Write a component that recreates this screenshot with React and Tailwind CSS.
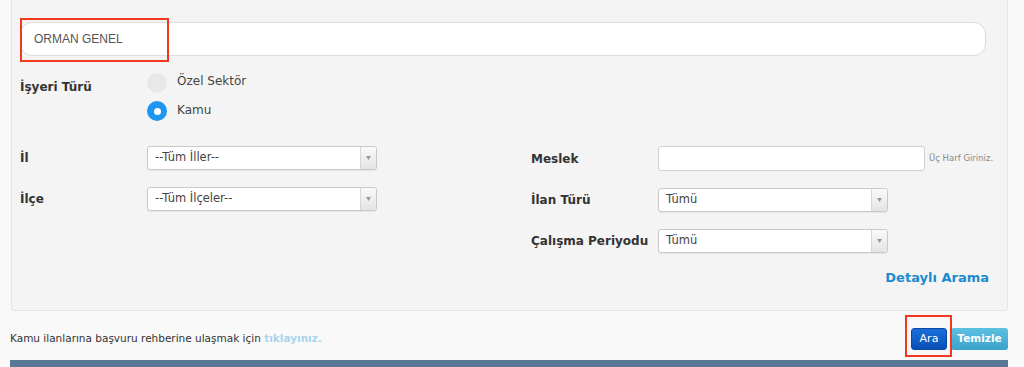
import React from 'react'

const FONT = { fontFamily: '"DejaVu Sans", Verdana, sans-serif' }

function Select({ value, w }) {
  return (
    <div className={`${w} h-[24px] flex items-stretch bg-white border border-[#c9c9c9] rounded-[3px] shadow-[0_1px_1px_rgba(0,0,0,0.06)]`}>
      <div className="flex-1 flex items-center pl-[7px] text-[11.5px] text-[#444]">{value}</div>
      <div className="w-[16px] border-l border-[#d6d6d6] bg-gradient-to-b from-[#fafafa] to-[#e4e4e4] rounded-r-[3px] flex items-center justify-center">
        <svg width="5" height="4" viewBox="0 0 5 4"><path d="M0 0h5L2.5 4z" fill="#999" /></svg>
      </div>
    </div>
  )
}

function Label({ children, w = 'w-[127px]' }) {
  return <div className={`${w} shrink-0 text-[12px] font-bold text-[#333]`}>{children}</div>
}

export default function App() {
  return (
    <div style={FONT} className="w-[1024px] h-[367px] overflow-hidden bg-[#f9f9f9] relative">
      {/* panel */}
      <div className="ml-[11px] w-[997px] h-[311px] bg-[#f4f4f4] border border-t-0 border-[#e4e4e4] rounded-b-[4px] pl-[8px] pr-[22px] pt-[22px]">
        {/* search */}
        <div className="relative">
          <div className="h-[34px] w-[966px] bg-white border border-[#dcdcdc] rounded-[12px] flex items-center pl-[13px] text-[12px] text-[#555]" style={{ fontFamily: '"Liberation Sans", Arial, sans-serif' }}>
            ORMAN GENEL
          </div>
          <div className="absolute left-0 top-[-4px] w-[149px] h-[44px] border-2 border-[#f0391f]" />
        </div>

        {/* isyeri turu */}
        <div className="flex mt-[17px]">
          <Label>
            <div className="pt-[5px]">İşyeri Türü</div>
          </Label>
          <div className="flex flex-col gap-[8px]">
            <div className="flex items-center gap-[10px]">
              <div className="w-[20px] h-[20px] rounded-full bg-[#e8e8e8]" />
              <span className="text-[12px] text-[#444] -mt-[4px]">Özel Sektör</span>
            </div>
            <div className="flex items-center gap-[10px]">
              <div className="w-[20px] h-[20px] rounded-full bg-[#1e96f0] flex items-center justify-center">
                <div className="w-[7px] h-[7px] rounded-full bg-white" />
              </div>
              <span className="text-[12px] text-[#444] -mt-[3px]">Kamu</span>
            </div>
          </div>
        </div>

        {/* fields */}
        <div className="flex mt-[25px]">
          <div className="w-[511px] shrink-0 flex flex-col gap-[17px]">
            <div className="flex items-center">
              <Label>İl</Label>
              <Select value="--Tüm İller--" w="w-[230px]" />
            </div>
            <div className="flex items-center">
              <Label>İlçe</Label>
              <Select value="--Tüm İlçeler--" w="w-[230px]" />
            </div>
          </div>
          <div className="flex flex-col gap-[17px]">
            <div className="flex items-center">
              <Label>Meslek</Label>
              <div className="w-[267px] shrink-0 h-[25px] bg-white border border-[#d0d0d0] rounded-[3px]" />
              <span className="ml-[4px] whitespace-nowrap text-[8.5px] text-[#888]">Üç Harf Giriniz.</span>
            </div>
            <div className="flex items-center">
              <Label>İlan Türü</Label>
              <Select value="Tümü" w="w-[230px]" />
            </div>
            <div className="flex items-center">
              <Label>Çalışma Periyodu</Label>
              <Select value="Tümü" w="w-[230px]" />
            </div>
          </div>
        </div>

        <div className="flex justify-end mt-[15px] -mr-[4px]">
          <span className="text-[13px] font-bold text-[#1a8bd0]">Detaylı Arama</span>
        </div>
      </div>

      {/* footer row */}
      <div className="flex items-center justify-between pl-[10px] pr-[16px] mt-[17px]">
        <div className="text-[10.5px] text-[#333]">
          Kamu ilanlarına başvuru rehberine ulaşmak için <span className="font-bold text-[#a9d5ee]">tıklayınız.</span>
        </div>
        <div className="flex items-center relative">
          <button className="w-[36px] h-[22px] rounded-[3px] bg-gradient-to-b from-[#1b6fd8] to-[#0a4fb8] text-white text-[11px] border border-[#0a48a8]">Ara</button>
          <button className="ml-[4px] w-[57px] h-[22px] rounded-[3px] bg-gradient-to-b from-[#5cc0e0] to-[#3aa2cc] text-white text-[10.5px] font-bold">Temizle</button>
          <div className="absolute left-[-6px] top-[-13px] w-[47px] h-[42px] border-2 border-[#f0391f]" />
        </div>
      </div>

      <div className="ml-[10px] w-[998px] h-[8px] bg-[#587896] mt-[10px]" />
    </div>
  )
}
